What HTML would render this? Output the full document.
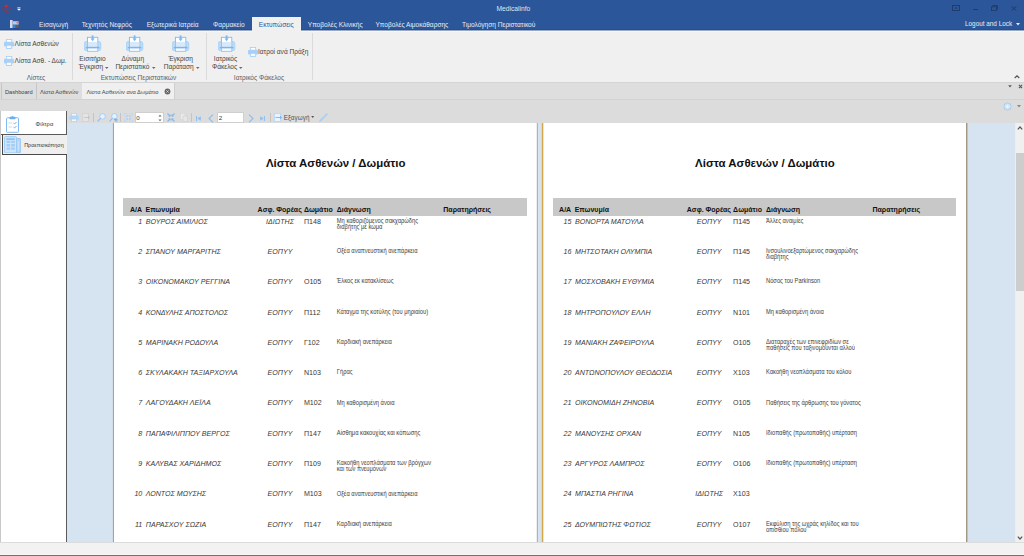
<!DOCTYPE html><html><head><meta charset="utf-8"><style>
*{margin:0;padding:0;box-sizing:border-box}
html,body{width:1024px;height:556px;overflow:hidden;background:#f0f0f0;font-family:"Liberation Sans",sans-serif}
.a{position:absolute}
.t{position:absolute;white-space:nowrap}
</style></head><body><div class="a" style="left:0px;top:0px;width:1024px;height:29px;background:#2b579a;"></div>
<div class="a" style="left:0px;top:29px;width:1024px;height:1px;background:#23508f;"></div>
<div class="a" style="left:0px;top:30px;width:1024px;height:52px;background:#f0f0f0;"></div>
<div class="a" style="left:0px;top:30px;width:1024px;height:1px;background:#9aaac4;"></div>
<div class="a" style="left:0px;top:31px;width:1024px;height:1px;background:#f7f6f3;"></div>
<div class="a" style="left:0px;top:82px;width:1024px;height:18px;background:#dedede;"></div>
<div class="a" style="left:0px;top:99px;width:1024px;height:1px;background:#d2d2d2;"></div>
<div class="a" style="left:0px;top:100px;width:1024px;height:11px;background:#dcdcdc;"></div>
<div class="a" style="left:0px;top:111px;width:1px;height:431px;background:#c8c8c8;"></div>
<div class="a" style="left:1px;top:111px;width:65px;height:431px;background:#fff;"></div>
<div class="a" style="left:66px;top:111px;width:1px;height:431px;background:#5a5a5a;"></div>
<div class="a" style="left:67px;top:111px;width:957px;height:12px;background:#dcdcdc;"></div>
<div class="a" style="left:67px;top:123px;width:949px;height:419px;background:#d6e4f1;"></div>
<div class="a" style="left:1015px;top:123px;width:1px;height:419px;background:#e8eef6;"></div>
<div class="a" style="left:1016px;top:123px;width:8px;height:419px;background:#f0f0f0;"></div>
<div class="a" style="left:1016px;top:153px;width:8px;height:138px;background:#cdcdcd;"></div>
<div class="a" style="left:0px;top:542px;width:1024px;height:1px;background:#dcdcdc;"></div>
<div class="a" style="left:0px;top:543px;width:1024px;height:11px;background:#f2f2f2;"></div>
<div class="a" style="left:0px;top:554px;width:1024px;height:1px;background:#f8f8f8;"></div>
<div class="a" style="left:0px;top:555px;width:1024px;height:1px;background:#707070;"></div>
<div class="a" style="left:112px;top:123px;width:1px;height:419px;background:#d0dcea;"></div>
<div class="a" style="left:113px;top:123px;width:1px;height:419px;background:#a0a4a8;"></div>
<div class="a" style="left:114px;top:123px;width:422px;height:419px;background:#fff;"></div>
<div class="a" style="left:536px;top:123px;width:1px;height:419px;background:#eeeeee;"></div>
<div class="a" style="left:537px;top:123px;width:1px;height:419px;background:#a9b5c1;"></div>
<div class="a" style="left:541px;top:123px;width:1px;height:419px;background:#e6d8a8;"></div>
<div class="a" style="left:542px;top:123px;width:1px;height:419px;background:#d4a848;"></div>
<div class="a" style="left:543px;top:123px;width:1px;height:419px;background:#e0e4ee;"></div>
<div class="a" style="left:544px;top:123px;width:422px;height:419px;background:#fff;"></div>
<div class="a" style="left:966px;top:123px;width:1px;height:419px;background:#a09880;"></div>
<div class="a" style="left:967px;top:123px;width:1px;height:419px;background:#f5c040;"></div>
<div class="a" style="left:968px;top:123px;width:1px;height:419px;background:#d8e2ee;"></div>
<div class="t" style="left:496.40px;top:6.13px;font-size:6.7px;line-height:6.7px;color:#dde5f0;font-weight:400;font-style:normal;">Medicalinfo</div>
<div class="a" style="left:252px;top:17px;width:49px;height:15px;background:#f0f0f0;"></div>
<div class="t" style="left:39.10px;top:22.36px;font-size:6.55px;line-height:6.55px;color:#e6ecf5;font-weight:400;font-style:normal;">Εισαγωγή</div>
<div class="t" style="left:81.70px;top:22.36px;font-size:6.55px;line-height:6.55px;color:#e6ecf5;font-weight:400;font-style:normal;">Τεχνητός Νεφρός</div>
<div class="t" style="left:146.70px;top:22.36px;font-size:6.55px;line-height:6.55px;color:#e6ecf5;font-weight:400;font-style:normal;">Εξωτερικά Ιατρεία</div>
<div class="t" style="left:213.00px;top:22.36px;font-size:6.55px;line-height:6.55px;color:#e6ecf5;font-weight:400;font-style:normal;">Φαρμακείο</div>
<div class="t" style="left:258.80px;top:22.36px;font-size:6.55px;line-height:6.55px;color:#2b579a;font-weight:400;font-style:normal;">Εκτυπώσεις</div>
<div class="t" style="left:307.80px;top:22.36px;font-size:6.55px;line-height:6.55px;color:#e6ecf5;font-weight:400;font-style:normal;">Υποβολές Κλινικής</div>
<div class="t" style="left:375.50px;top:22.36px;font-size:6.55px;line-height:6.55px;color:#e6ecf5;font-weight:400;font-style:normal;">Υποβολές Αιμοκάθαρσης</div>
<div class="t" style="left:462.00px;top:22.36px;font-size:6.55px;line-height:6.55px;color:#e6ecf5;font-weight:400;font-style:normal;">Τιμολόγηση Περιστατικού</div>
<div class="t" style="left:965.00px;top:20.80px;font-size:6.38px;line-height:6.38px;color:#e6ecf5;font-weight:400;font-style:normal;">Logout and Lock</div>
<svg class="a" style="left:4px;top:39px" width="10" height="10" viewBox="0 0 10 10"><rect x="2.3" y="0.4" width="5.4" height="3" fill="#fff" stroke="#a4cef6" stroke-width="0.8"/><rect x="0" y="2.8" width="10" height="4.6" rx="1.2" fill="#a8d0f8"/><rect x="2.3" y="6.2" width="5.4" height="3.2" fill="#f2f8fe" stroke="#a4cef6" stroke-width="0.8"/></svg>
<div class="t" style="left:14.60px;top:40.56px;font-size:6.55px;line-height:6.55px;color:#454545;font-weight:400;font-style:normal;">Λίστα Ασθενών</div>
<svg class="a" style="left:4px;top:56px" width="10" height="10" viewBox="0 0 10 10"><rect x="2.3" y="0.4" width="5.4" height="3" fill="#fff" stroke="#a4cef6" stroke-width="0.8"/><rect x="0" y="2.8" width="10" height="4.6" rx="1.2" fill="#a8d0f8"/><rect x="2.3" y="6.2" width="5.4" height="3.2" fill="#f2f8fe" stroke="#a4cef6" stroke-width="0.8"/></svg>
<div class="t" style="left:14.60px;top:57.56px;font-size:6.55px;line-height:6.55px;color:#454545;font-weight:400;font-style:normal;">Λίστα Ασθ. - Δωμ.</div>
<div class="t" style="left:-164.00px;width:400px;text-align:center;top:74.66px;font-size:6.55px;line-height:6.55px;color:#5e5e5e;font-weight:400;font-style:normal;">Λίστες</div>
<div class="a" style="left:72px;top:33px;width:1px;height:47px;background:#dadada;"></div>
<svg class="a" style="left:84px;top:35px" width="18" height="18" viewBox="0 0 18 18"><rect x="0.4" y="6.6" width="16.4" height="9" rx="1.6" fill="#bcdcf8" stroke="#a6d0f6" stroke-width="0.8"/><rect x="3.4" y="2.3" width="10.4" height="9.6" fill="#fff" stroke="#86b8ec" stroke-width="0.9"/><rect x="3.9" y="7" width="9.4" height="4.5" fill="#d6eafc"/><rect x="7.7" y="0.4" width="1.8" height="4" fill="#80b8ee"/><path d="M6.6 3.6 L8.6 6.2 L10.6 3.6Z" fill="#80b8ee"/><rect x="1.8" y="12.2" width="13.6" height="1.1" fill="#6aa8e8"/><rect x="3.4" y="13" width="10.4" height="3.3" fill="#f4faff" stroke="#8cbcee" stroke-width="0.8"/></svg>
<svg class="a" style="left:126px;top:35px" width="18" height="18" viewBox="0 0 18 18"><rect x="0.4" y="6.6" width="16.4" height="9" rx="1.6" fill="#bcdcf8" stroke="#a6d0f6" stroke-width="0.8"/><rect x="3.4" y="2.3" width="10.4" height="9.6" fill="#fff" stroke="#86b8ec" stroke-width="0.9"/><rect x="3.9" y="7" width="9.4" height="4.5" fill="#d6eafc"/><rect x="7.7" y="0.4" width="1.8" height="4" fill="#80b8ee"/><path d="M6.6 3.6 L8.6 6.2 L10.6 3.6Z" fill="#80b8ee"/><rect x="1.8" y="12.2" width="13.6" height="1.1" fill="#6aa8e8"/><rect x="3.4" y="13" width="10.4" height="3.3" fill="#f4faff" stroke="#8cbcee" stroke-width="0.8"/></svg>
<svg class="a" style="left:172px;top:35px" width="18" height="18" viewBox="0 0 18 18"><rect x="0.4" y="6.6" width="16.4" height="9" rx="1.6" fill="#bcdcf8" stroke="#a6d0f6" stroke-width="0.8"/><rect x="3.4" y="2.3" width="10.4" height="9.6" fill="#fff" stroke="#86b8ec" stroke-width="0.9"/><rect x="3.9" y="7" width="9.4" height="4.5" fill="#d6eafc"/><rect x="7.7" y="0.4" width="1.8" height="4" fill="#80b8ee"/><path d="M6.6 3.6 L8.6 6.2 L10.6 3.6Z" fill="#80b8ee"/><rect x="1.8" y="12.2" width="13.6" height="1.1" fill="#6aa8e8"/><rect x="3.4" y="13" width="10.4" height="3.3" fill="#f4faff" stroke="#8cbcee" stroke-width="0.8"/></svg>
<svg class="a" style="left:218px;top:35px" width="18" height="18" viewBox="0 0 18 18"><rect x="0.4" y="6.6" width="16.4" height="9" rx="1.6" fill="#bcdcf8" stroke="#a6d0f6" stroke-width="0.8"/><rect x="3.4" y="2.3" width="10.4" height="9.6" fill="#fff" stroke="#86b8ec" stroke-width="0.9"/><rect x="3.9" y="7" width="9.4" height="4.5" fill="#d6eafc"/><rect x="7.7" y="0.4" width="1.8" height="4" fill="#80b8ee"/><path d="M6.6 3.6 L8.6 6.2 L10.6 3.6Z" fill="#80b8ee"/><rect x="1.8" y="12.2" width="13.6" height="1.1" fill="#6aa8e8"/><rect x="3.4" y="13" width="10.4" height="3.3" fill="#f4faff" stroke="#8cbcee" stroke-width="0.8"/></svg>
<div class="t" style="left:-107.50px;width:400px;text-align:center;top:56.46px;font-size:6.55px;line-height:6.55px;color:#454545;font-weight:400;font-style:normal;">Εισιτήριο</div>
<div class="t" style="left:-109.00px;width:400px;text-align:center;top:64.46px;font-size:6.55px;line-height:6.55px;color:#454545;font-weight:400;font-style:normal;">Έγκριση</div>
<div class="t" style="left:-67.20px;width:400px;text-align:center;top:56.46px;font-size:6.55px;line-height:6.55px;color:#454545;font-weight:400;font-style:normal;">Δύναμη</div>
<div class="t" style="left:-67.60px;width:400px;text-align:center;top:64.46px;font-size:6.55px;line-height:6.55px;color:#454545;font-weight:400;font-style:normal;">Περιστατικό</div>
<div class="t" style="left:-19.30px;width:400px;text-align:center;top:56.46px;font-size:6.55px;line-height:6.55px;color:#454545;font-weight:400;font-style:normal;">Έγκριση</div>
<div class="t" style="left:-21.30px;width:400px;text-align:center;top:64.46px;font-size:6.55px;line-height:6.55px;color:#454545;font-weight:400;font-style:normal;">Παράταση</div>
<div class="t" style="left:25.50px;width:400px;text-align:center;top:56.46px;font-size:6.55px;line-height:6.55px;color:#454545;font-weight:400;font-style:normal;">Ιατρικός</div>
<div class="t" style="left:24.60px;width:400px;text-align:center;top:64.46px;font-size:6.55px;line-height:6.55px;color:#454545;font-weight:400;font-style:normal;">Φάκελος</div>
<svg class="a" style="left:104.75px;top:66.5px" width="4" height="3" viewBox="0 0 4 3"><path d="M0 0 L3.5 0 L1.75 2Z" fill="#6a6a6a"/></svg>
<svg class="a" style="left:152.45px;top:66.5px" width="4" height="3" viewBox="0 0 4 3"><path d="M0 0 L3.5 0 L1.75 2Z" fill="#6a6a6a"/></svg>
<svg class="a" style="left:196.15px;top:66.5px" width="4" height="3" viewBox="0 0 4 3"><path d="M0 0 L3.5 0 L1.75 2Z" fill="#6a6a6a"/></svg>
<svg class="a" style="left:238.75px;top:66.5px" width="4" height="3" viewBox="0 0 4 3"><path d="M0 0 L3.5 0 L1.75 2Z" fill="#6a6a6a"/></svg>
<div class="t" style="left:-61.50px;width:400px;text-align:center;top:74.66px;font-size:6.55px;line-height:6.55px;color:#5e5e5e;font-weight:400;font-style:normal;">Εκτυπώσεις Περιστατικών</div>
<div class="a" style="left:206px;top:33px;width:1px;height:47px;background:#dadada;"></div>
<svg class="a" style="left:248px;top:47px" width="10" height="10" viewBox="0 0 10 10"><rect x="2.3" y="0.4" width="5.4" height="3" fill="#fff" stroke="#a4cef6" stroke-width="0.8"/><rect x="0" y="2.8" width="10" height="4.6" rx="1.2" fill="#a8d0f8"/><rect x="2.3" y="6.2" width="5.4" height="3.2" fill="#f2f8fe" stroke="#a4cef6" stroke-width="0.8"/></svg>
<div class="t" style="left:258.00px;top:48.86px;font-size:6.55px;line-height:6.55px;color:#454545;font-weight:400;font-style:normal;">Ιατροί ανά Πράξη</div>
<div class="t" style="left:59.00px;width:400px;text-align:center;top:74.66px;font-size:6.55px;line-height:6.55px;color:#5e5e5e;font-weight:400;font-style:normal;">Ιατρικός Φάκελος</div>
<div class="a" style="left:312px;top:33px;width:1px;height:47px;background:#dadada;"></div>
<div class="t" style="left:135.70px;width:400px;text-align:center;top:157.51px;font-size:11.45px;line-height:11.45px;color:#111;font-weight:700;font-style:normal;">Λίστα Ασθενών / Δωμάτιο</div>
<div class="a" style="left:123.3px;top:197.8px;width:403.7px;height:17.8px;background:#c8c8c8;"></div>
<div class="t" style="left:129.90px;top:205.57px;font-size:7.0px;line-height:7.0px;color:#111;font-weight:700;font-style:normal;transform:scaleY(1.1);transform-origin:50% 5.926px;">A/A</div>
<div class="t" style="left:145.50px;top:205.57px;font-size:7.0px;line-height:7.0px;color:#111;font-weight:700;font-style:normal;transform:scaleY(1.1);transform-origin:50% 5.926px;">Επωνυμία</div>
<div class="t" style="left:257.60px;top:205.57px;font-size:7.0px;line-height:7.0px;color:#111;font-weight:700;font-style:normal;transform:scaleY(1.1);transform-origin:50% 5.926px;">Ασφ. Φορέας</div>
<div class="t" style="left:303.90px;top:205.57px;font-size:7.0px;line-height:7.0px;color:#111;font-weight:700;font-style:normal;transform:scaleY(1.1);transform-origin:50% 5.926px;">Δωμάτιο</div>
<div class="t" style="left:336.80px;top:205.57px;font-size:7.0px;line-height:7.0px;color:#111;font-weight:700;font-style:normal;transform:scaleY(1.1);transform-origin:50% 5.926px;">Διάγνωση</div>
<div class="t" style="left:443.30px;top:205.57px;font-size:7.0px;line-height:7.0px;color:#111;font-weight:700;font-style:normal;transform:scaleY(1.1);transform-origin:50% 5.926px;">Παρατηρήσεις</div>
<div class="t" style="right:881.70px;top:218.59px;font-size:7.1px;line-height:7.1px;color:#383838;font-weight:400;font-style:italic;transform:scaleY(1.12);transform-origin:50% 6.010px;">1</div>
<div class="t" style="left:145.80px;top:218.59px;font-size:7.1px;line-height:7.1px;color:#383838;font-weight:400;font-style:italic;transform:scaleY(1.12);transform-origin:50% 6.010px;">ΒΟΥΡΟΣ ΑΙΜΙΛΙΟΣ</div>
<div class="t" style="left:80.00px;width:400px;text-align:center;top:218.59px;font-size:7.1px;line-height:7.1px;color:#383838;font-weight:400;font-style:italic;transform:scaleY(1.12);transform-origin:50% 6.010px;">ΙΔΙΩΤΗΣ</div>
<div class="t" style="left:303.90px;top:218.59px;font-size:7.1px;line-height:7.1px;color:#383838;font-weight:400;font-style:normal;transform:scaleY(1.12);transform-origin:50% 6.010px;">Π148</div>
<div class="t" style="left:336.80px;top:218.73px;font-size:5.75px;line-height:5.75px;color:#3c3c3c;font-weight:400;font-style:normal;transform:scaleY(1.12);transform-origin:50% 4.867px;">Μη καθοριζόμενος σακχαρώδης</div>
<div class="t" style="left:336.80px;top:224.73px;font-size:5.75px;line-height:5.75px;color:#3c3c3c;font-weight:400;font-style:normal;transform:scaleY(1.12);transform-origin:50% 4.867px;">διαβήτης με κώμα</div>
<div class="t" style="right:881.70px;top:248.90px;font-size:7.1px;line-height:7.1px;color:#383838;font-weight:400;font-style:italic;transform:scaleY(1.12);transform-origin:50% 6.010px;">2</div>
<div class="t" style="left:145.80px;top:248.90px;font-size:7.1px;line-height:7.1px;color:#383838;font-weight:400;font-style:italic;transform:scaleY(1.12);transform-origin:50% 6.010px;">ΣΠΑΝΟΥ ΜΑΡΓΑΡΙΤΗΣ</div>
<div class="t" style="left:80.00px;width:400px;text-align:center;top:248.90px;font-size:7.1px;line-height:7.1px;color:#383838;font-weight:400;font-style:italic;transform:scaleY(1.12);transform-origin:50% 6.010px;">ΕΟΠΥΥ</div>
<div class="t" style="left:336.80px;top:249.04px;font-size:5.75px;line-height:5.75px;color:#3c3c3c;font-weight:400;font-style:normal;transform:scaleY(1.12);transform-origin:50% 4.867px;">Οξέα αναπνευστική ανεπάρκεια</div>
<div class="t" style="right:881.70px;top:279.21px;font-size:7.1px;line-height:7.1px;color:#383838;font-weight:400;font-style:italic;transform:scaleY(1.12);transform-origin:50% 6.010px;">3</div>
<div class="t" style="left:145.80px;top:279.21px;font-size:7.1px;line-height:7.1px;color:#383838;font-weight:400;font-style:italic;transform:scaleY(1.12);transform-origin:50% 6.010px;">ΟΙΚΟΝΟΜΑΚΟΥ ΡΕΓΓΙΝΑ</div>
<div class="t" style="left:80.00px;width:400px;text-align:center;top:279.21px;font-size:7.1px;line-height:7.1px;color:#383838;font-weight:400;font-style:italic;transform:scaleY(1.12);transform-origin:50% 6.010px;">ΕΟΠΥΥ</div>
<div class="t" style="left:303.90px;top:279.21px;font-size:7.1px;line-height:7.1px;color:#383838;font-weight:400;font-style:normal;transform:scaleY(1.12);transform-origin:50% 6.010px;">Ο105</div>
<div class="t" style="left:336.80px;top:279.35px;font-size:5.75px;line-height:5.75px;color:#3c3c3c;font-weight:400;font-style:normal;transform:scaleY(1.12);transform-origin:50% 4.867px;">Έλκος εκ κατακλίσεως</div>
<div class="t" style="right:881.70px;top:309.52px;font-size:7.1px;line-height:7.1px;color:#383838;font-weight:400;font-style:italic;transform:scaleY(1.12);transform-origin:50% 6.010px;">4</div>
<div class="t" style="left:145.80px;top:309.52px;font-size:7.1px;line-height:7.1px;color:#383838;font-weight:400;font-style:italic;transform:scaleY(1.12);transform-origin:50% 6.010px;">ΚΟΝΔΥΛΗΣ ΑΠΟΣΤΟΛΟΣ</div>
<div class="t" style="left:80.00px;width:400px;text-align:center;top:309.52px;font-size:7.1px;line-height:7.1px;color:#383838;font-weight:400;font-style:italic;transform:scaleY(1.12);transform-origin:50% 6.010px;">ΕΟΠΥΥ</div>
<div class="t" style="left:303.90px;top:309.52px;font-size:7.1px;line-height:7.1px;color:#383838;font-weight:400;font-style:normal;transform:scaleY(1.12);transform-origin:50% 6.010px;">Π112</div>
<div class="t" style="left:336.80px;top:309.66px;font-size:5.75px;line-height:5.75px;color:#3c3c3c;font-weight:400;font-style:normal;transform:scaleY(1.12);transform-origin:50% 4.867px;">Κάταγμα της κοτύλης (του μηριαίου)</div>
<div class="t" style="right:881.70px;top:339.83px;font-size:7.1px;line-height:7.1px;color:#383838;font-weight:400;font-style:italic;transform:scaleY(1.12);transform-origin:50% 6.010px;">5</div>
<div class="t" style="left:145.80px;top:339.83px;font-size:7.1px;line-height:7.1px;color:#383838;font-weight:400;font-style:italic;transform:scaleY(1.12);transform-origin:50% 6.010px;">ΜΑΡΙΝΑΚΗ ΡΟΔΟΥΛΑ</div>
<div class="t" style="left:80.00px;width:400px;text-align:center;top:339.83px;font-size:7.1px;line-height:7.1px;color:#383838;font-weight:400;font-style:italic;transform:scaleY(1.12);transform-origin:50% 6.010px;">ΕΟΠΥΥ</div>
<div class="t" style="left:303.90px;top:339.83px;font-size:7.1px;line-height:7.1px;color:#383838;font-weight:400;font-style:normal;transform:scaleY(1.12);transform-origin:50% 6.010px;">Γ102</div>
<div class="t" style="left:336.80px;top:339.97px;font-size:5.75px;line-height:5.75px;color:#3c3c3c;font-weight:400;font-style:normal;transform:scaleY(1.12);transform-origin:50% 4.867px;">Καρδιακή ανεπάρκεια</div>
<div class="t" style="right:881.70px;top:370.14px;font-size:7.1px;line-height:7.1px;color:#383838;font-weight:400;font-style:italic;transform:scaleY(1.12);transform-origin:50% 6.010px;">6</div>
<div class="t" style="left:145.80px;top:370.14px;font-size:7.1px;line-height:7.1px;color:#383838;font-weight:400;font-style:italic;transform:scaleY(1.12);transform-origin:50% 6.010px;">ΣΚΥΛΑΚΑΚΗ ΤΑΞΙΑΡΧΟΥΛΑ</div>
<div class="t" style="left:80.00px;width:400px;text-align:center;top:370.14px;font-size:7.1px;line-height:7.1px;color:#383838;font-weight:400;font-style:italic;transform:scaleY(1.12);transform-origin:50% 6.010px;">ΕΟΠΥΥ</div>
<div class="t" style="left:303.90px;top:370.14px;font-size:7.1px;line-height:7.1px;color:#383838;font-weight:400;font-style:normal;transform:scaleY(1.12);transform-origin:50% 6.010px;">Ν103</div>
<div class="t" style="left:336.80px;top:370.28px;font-size:5.75px;line-height:5.75px;color:#3c3c3c;font-weight:400;font-style:normal;transform:scaleY(1.12);transform-origin:50% 4.867px;">Γήρας</div>
<div class="t" style="right:881.70px;top:400.45px;font-size:7.1px;line-height:7.1px;color:#383838;font-weight:400;font-style:italic;transform:scaleY(1.12);transform-origin:50% 6.010px;">7</div>
<div class="t" style="left:145.80px;top:400.45px;font-size:7.1px;line-height:7.1px;color:#383838;font-weight:400;font-style:italic;transform:scaleY(1.12);transform-origin:50% 6.010px;">ΛΑΓΟΥΔΑΚΗ ΛΕΪΛΑ</div>
<div class="t" style="left:80.00px;width:400px;text-align:center;top:400.45px;font-size:7.1px;line-height:7.1px;color:#383838;font-weight:400;font-style:italic;transform:scaleY(1.12);transform-origin:50% 6.010px;">ΕΟΠΥΥ</div>
<div class="t" style="left:303.90px;top:400.45px;font-size:7.1px;line-height:7.1px;color:#383838;font-weight:400;font-style:normal;transform:scaleY(1.12);transform-origin:50% 6.010px;">Μ102</div>
<div class="t" style="left:336.80px;top:400.59px;font-size:5.75px;line-height:5.75px;color:#3c3c3c;font-weight:400;font-style:normal;transform:scaleY(1.12);transform-origin:50% 4.867px;">Μη καθορισμένη άνοια</div>
<div class="t" style="right:881.70px;top:430.76px;font-size:7.1px;line-height:7.1px;color:#383838;font-weight:400;font-style:italic;transform:scaleY(1.12);transform-origin:50% 6.010px;">8</div>
<div class="t" style="left:145.80px;top:430.76px;font-size:7.1px;line-height:7.1px;color:#383838;font-weight:400;font-style:italic;transform:scaleY(1.12);transform-origin:50% 6.010px;">ΠΑΠΑΦΙΛΙΠΠΟΥ ΒΕΡΓΟΣ</div>
<div class="t" style="left:80.00px;width:400px;text-align:center;top:430.76px;font-size:7.1px;line-height:7.1px;color:#383838;font-weight:400;font-style:italic;transform:scaleY(1.12);transform-origin:50% 6.010px;">ΕΟΠΥΥ</div>
<div class="t" style="left:303.90px;top:430.76px;font-size:7.1px;line-height:7.1px;color:#383838;font-weight:400;font-style:normal;transform:scaleY(1.12);transform-origin:50% 6.010px;">Π147</div>
<div class="t" style="left:336.80px;top:430.90px;font-size:5.75px;line-height:5.75px;color:#3c3c3c;font-weight:400;font-style:normal;transform:scaleY(1.12);transform-origin:50% 4.867px;">Αίσθημα κακουχίας και κόπωσης</div>
<div class="t" style="right:881.70px;top:461.07px;font-size:7.1px;line-height:7.1px;color:#383838;font-weight:400;font-style:italic;transform:scaleY(1.12);transform-origin:50% 6.010px;">9</div>
<div class="t" style="left:145.80px;top:461.07px;font-size:7.1px;line-height:7.1px;color:#383838;font-weight:400;font-style:italic;transform:scaleY(1.12);transform-origin:50% 6.010px;">ΚΑΛΥΒΑΣ ΧΑΡΙΔΗΜΟΣ</div>
<div class="t" style="left:80.00px;width:400px;text-align:center;top:461.07px;font-size:7.1px;line-height:7.1px;color:#383838;font-weight:400;font-style:italic;transform:scaleY(1.12);transform-origin:50% 6.010px;">ΕΟΠΥΥ</div>
<div class="t" style="left:303.90px;top:461.07px;font-size:7.1px;line-height:7.1px;color:#383838;font-weight:400;font-style:normal;transform:scaleY(1.12);transform-origin:50% 6.010px;">Π109</div>
<div class="t" style="left:336.80px;top:461.21px;font-size:5.75px;line-height:5.75px;color:#3c3c3c;font-weight:400;font-style:normal;transform:scaleY(1.12);transform-origin:50% 4.867px;">Κακοήθη νεοπλάσματα των βρόγχων</div>
<div class="t" style="left:336.80px;top:467.21px;font-size:5.75px;line-height:5.75px;color:#3c3c3c;font-weight:400;font-style:normal;transform:scaleY(1.12);transform-origin:50% 4.867px;">και των πνευμόνων</div>
<div class="t" style="right:881.70px;top:491.38px;font-size:7.1px;line-height:7.1px;color:#383838;font-weight:400;font-style:italic;transform:scaleY(1.12);transform-origin:50% 6.010px;">10</div>
<div class="t" style="left:145.80px;top:491.38px;font-size:7.1px;line-height:7.1px;color:#383838;font-weight:400;font-style:italic;transform:scaleY(1.12);transform-origin:50% 6.010px;">ΛΟΝΤΟΣ ΜΩΥΣΗΣ</div>
<div class="t" style="left:80.00px;width:400px;text-align:center;top:491.38px;font-size:7.1px;line-height:7.1px;color:#383838;font-weight:400;font-style:italic;transform:scaleY(1.12);transform-origin:50% 6.010px;">ΕΟΠΥΥ</div>
<div class="t" style="left:303.90px;top:491.38px;font-size:7.1px;line-height:7.1px;color:#383838;font-weight:400;font-style:normal;transform:scaleY(1.12);transform-origin:50% 6.010px;">Μ103</div>
<div class="t" style="left:336.80px;top:491.52px;font-size:5.75px;line-height:5.75px;color:#3c3c3c;font-weight:400;font-style:normal;transform:scaleY(1.12);transform-origin:50% 4.867px;">Οξέα αναπνευστική ανεπάρκεια</div>
<div class="t" style="right:881.70px;top:521.69px;font-size:7.1px;line-height:7.1px;color:#383838;font-weight:400;font-style:italic;transform:scaleY(1.12);transform-origin:50% 6.010px;">11</div>
<div class="t" style="left:145.80px;top:521.69px;font-size:7.1px;line-height:7.1px;color:#383838;font-weight:400;font-style:italic;transform:scaleY(1.12);transform-origin:50% 6.010px;">ΠΑΡΑΣΧΟΥ ΣΩΖΙΑ</div>
<div class="t" style="left:80.00px;width:400px;text-align:center;top:521.69px;font-size:7.1px;line-height:7.1px;color:#383838;font-weight:400;font-style:italic;transform:scaleY(1.12);transform-origin:50% 6.010px;">ΕΟΠΥΥ</div>
<div class="t" style="left:303.90px;top:521.69px;font-size:7.1px;line-height:7.1px;color:#383838;font-weight:400;font-style:normal;transform:scaleY(1.12);transform-origin:50% 6.010px;">Π147</div>
<div class="t" style="left:336.80px;top:521.83px;font-size:5.75px;line-height:5.75px;color:#3c3c3c;font-weight:400;font-style:normal;transform:scaleY(1.12);transform-origin:50% 4.867px;">Καρδιακή ανεπάρκεια</div>
<div class="t" style="left:564.90px;width:400px;text-align:center;top:157.51px;font-size:11.45px;line-height:11.45px;color:#111;font-weight:700;font-style:normal;">Λίστα Ασθενών / Δωμάτιο</div>
<div class="a" style="left:552.5px;top:197.8px;width:403.7px;height:17.8px;background:#c8c8c8;"></div>
<div class="t" style="left:559.10px;top:205.57px;font-size:7.0px;line-height:7.0px;color:#111;font-weight:700;font-style:normal;transform:scaleY(1.1);transform-origin:50% 5.926px;">A/A</div>
<div class="t" style="left:574.70px;top:205.57px;font-size:7.0px;line-height:7.0px;color:#111;font-weight:700;font-style:normal;transform:scaleY(1.1);transform-origin:50% 5.926px;">Επωνυμία</div>
<div class="t" style="left:686.80px;top:205.57px;font-size:7.0px;line-height:7.0px;color:#111;font-weight:700;font-style:normal;transform:scaleY(1.1);transform-origin:50% 5.926px;">Ασφ. Φορέας</div>
<div class="t" style="left:733.10px;top:205.57px;font-size:7.0px;line-height:7.0px;color:#111;font-weight:700;font-style:normal;transform:scaleY(1.1);transform-origin:50% 5.926px;">Δωμάτιο</div>
<div class="t" style="left:766.00px;top:205.57px;font-size:7.0px;line-height:7.0px;color:#111;font-weight:700;font-style:normal;transform:scaleY(1.1);transform-origin:50% 5.926px;">Διάγνωση</div>
<div class="t" style="left:872.50px;top:205.57px;font-size:7.0px;line-height:7.0px;color:#111;font-weight:700;font-style:normal;transform:scaleY(1.1);transform-origin:50% 5.926px;">Παρατηρήσεις</div>
<div class="t" style="right:452.50px;top:218.59px;font-size:7.1px;line-height:7.1px;color:#383838;font-weight:400;font-style:italic;transform:scaleY(1.12);transform-origin:50% 6.010px;">15</div>
<div class="t" style="left:575.00px;top:218.59px;font-size:7.1px;line-height:7.1px;color:#383838;font-weight:400;font-style:italic;transform:scaleY(1.12);transform-origin:50% 6.010px;">ΒΟΝΟΡΤΑ ΜΑΤΟΥΛΑ</div>
<div class="t" style="left:509.20px;width:400px;text-align:center;top:218.59px;font-size:7.1px;line-height:7.1px;color:#383838;font-weight:400;font-style:italic;transform:scaleY(1.12);transform-origin:50% 6.010px;">ΕΟΠΥΥ</div>
<div class="t" style="left:733.10px;top:218.59px;font-size:7.1px;line-height:7.1px;color:#383838;font-weight:400;font-style:normal;transform:scaleY(1.12);transform-origin:50% 6.010px;">Π145</div>
<div class="t" style="left:766.00px;top:218.73px;font-size:5.75px;line-height:5.75px;color:#3c3c3c;font-weight:400;font-style:normal;transform:scaleY(1.12);transform-origin:50% 4.867px;">Άλλες αναιμίες</div>
<div class="t" style="right:452.50px;top:248.90px;font-size:7.1px;line-height:7.1px;color:#383838;font-weight:400;font-style:italic;transform:scaleY(1.12);transform-origin:50% 6.010px;">16</div>
<div class="t" style="left:575.00px;top:248.90px;font-size:7.1px;line-height:7.1px;color:#383838;font-weight:400;font-style:italic;transform:scaleY(1.12);transform-origin:50% 6.010px;">ΜΗΤΣΟΤΑΚΗ ΟΛΥΜΠΙΑ</div>
<div class="t" style="left:509.20px;width:400px;text-align:center;top:248.90px;font-size:7.1px;line-height:7.1px;color:#383838;font-weight:400;font-style:italic;transform:scaleY(1.12);transform-origin:50% 6.010px;">ΕΟΠΥΥ</div>
<div class="t" style="left:733.10px;top:248.90px;font-size:7.1px;line-height:7.1px;color:#383838;font-weight:400;font-style:normal;transform:scaleY(1.12);transform-origin:50% 6.010px;">Π145</div>
<div class="t" style="left:766.00px;top:249.04px;font-size:5.75px;line-height:5.75px;color:#3c3c3c;font-weight:400;font-style:normal;transform:scaleY(1.12);transform-origin:50% 4.867px;">Ινσουλινοεξαρτώμενος σακχαρώδης</div>
<div class="t" style="left:766.00px;top:255.04px;font-size:5.75px;line-height:5.75px;color:#3c3c3c;font-weight:400;font-style:normal;transform:scaleY(1.12);transform-origin:50% 4.867px;">διαβήτης</div>
<div class="t" style="right:452.50px;top:279.21px;font-size:7.1px;line-height:7.1px;color:#383838;font-weight:400;font-style:italic;transform:scaleY(1.12);transform-origin:50% 6.010px;">17</div>
<div class="t" style="left:575.00px;top:279.21px;font-size:7.1px;line-height:7.1px;color:#383838;font-weight:400;font-style:italic;transform:scaleY(1.12);transform-origin:50% 6.010px;">ΜΟΣΧΟΒΑΚΗ ΕΥΘΥΜΙΑ</div>
<div class="t" style="left:509.20px;width:400px;text-align:center;top:279.21px;font-size:7.1px;line-height:7.1px;color:#383838;font-weight:400;font-style:italic;transform:scaleY(1.12);transform-origin:50% 6.010px;">ΕΟΠΥΥ</div>
<div class="t" style="left:733.10px;top:279.21px;font-size:7.1px;line-height:7.1px;color:#383838;font-weight:400;font-style:normal;transform:scaleY(1.12);transform-origin:50% 6.010px;">Π145</div>
<div class="t" style="left:766.00px;top:279.35px;font-size:5.75px;line-height:5.75px;color:#3c3c3c;font-weight:400;font-style:normal;transform:scaleY(1.12);transform-origin:50% 4.867px;">Νόσος του Parkinson</div>
<div class="t" style="right:452.50px;top:309.52px;font-size:7.1px;line-height:7.1px;color:#383838;font-weight:400;font-style:italic;transform:scaleY(1.12);transform-origin:50% 6.010px;">18</div>
<div class="t" style="left:575.00px;top:309.52px;font-size:7.1px;line-height:7.1px;color:#383838;font-weight:400;font-style:italic;transform:scaleY(1.12);transform-origin:50% 6.010px;">ΜΗΤΡΟΠΟΥΛΟΥ ΕΛΛΗ</div>
<div class="t" style="left:509.20px;width:400px;text-align:center;top:309.52px;font-size:7.1px;line-height:7.1px;color:#383838;font-weight:400;font-style:italic;transform:scaleY(1.12);transform-origin:50% 6.010px;">ΕΟΠΥΥ</div>
<div class="t" style="left:733.10px;top:309.52px;font-size:7.1px;line-height:7.1px;color:#383838;font-weight:400;font-style:normal;transform:scaleY(1.12);transform-origin:50% 6.010px;">Ν101</div>
<div class="t" style="left:766.00px;top:309.66px;font-size:5.75px;line-height:5.75px;color:#3c3c3c;font-weight:400;font-style:normal;transform:scaleY(1.12);transform-origin:50% 4.867px;">Μη καθορισμένη άνοια</div>
<div class="t" style="right:452.50px;top:339.83px;font-size:7.1px;line-height:7.1px;color:#383838;font-weight:400;font-style:italic;transform:scaleY(1.12);transform-origin:50% 6.010px;">19</div>
<div class="t" style="left:575.00px;top:339.83px;font-size:7.1px;line-height:7.1px;color:#383838;font-weight:400;font-style:italic;transform:scaleY(1.12);transform-origin:50% 6.010px;">ΜΑΝΙΑΚΗ ΖΑΦΕΙΡΟΥΛΑ</div>
<div class="t" style="left:509.20px;width:400px;text-align:center;top:339.83px;font-size:7.1px;line-height:7.1px;color:#383838;font-weight:400;font-style:italic;transform:scaleY(1.12);transform-origin:50% 6.010px;">ΕΟΠΥΥ</div>
<div class="t" style="left:733.10px;top:339.83px;font-size:7.1px;line-height:7.1px;color:#383838;font-weight:400;font-style:normal;transform:scaleY(1.12);transform-origin:50% 6.010px;">Ο105</div>
<div class="t" style="left:766.00px;top:339.97px;font-size:5.75px;line-height:5.75px;color:#3c3c3c;font-weight:400;font-style:normal;transform:scaleY(1.12);transform-origin:50% 4.867px;">Διαταραχές των επινεφριδίων σε</div>
<div class="t" style="left:766.00px;top:345.97px;font-size:5.75px;line-height:5.75px;color:#3c3c3c;font-weight:400;font-style:normal;transform:scaleY(1.12);transform-origin:50% 4.867px;">παθήσεις που ταξινομούνται αλλού</div>
<div class="t" style="right:452.50px;top:370.14px;font-size:7.1px;line-height:7.1px;color:#383838;font-weight:400;font-style:italic;transform:scaleY(1.12);transform-origin:50% 6.010px;">20</div>
<div class="t" style="left:575.00px;top:370.14px;font-size:7.1px;line-height:7.1px;color:#383838;font-weight:400;font-style:italic;transform:scaleY(1.12);transform-origin:50% 6.010px;">ΑΝΤΩΝΟΠΟΥΛΟΥ ΘΕΟΔΟΣΙΑ</div>
<div class="t" style="left:509.20px;width:400px;text-align:center;top:370.14px;font-size:7.1px;line-height:7.1px;color:#383838;font-weight:400;font-style:italic;transform:scaleY(1.12);transform-origin:50% 6.010px;">ΕΟΠΥΥ</div>
<div class="t" style="left:733.10px;top:370.14px;font-size:7.1px;line-height:7.1px;color:#383838;font-weight:400;font-style:normal;transform:scaleY(1.12);transform-origin:50% 6.010px;">Χ103</div>
<div class="t" style="left:766.00px;top:370.28px;font-size:5.75px;line-height:5.75px;color:#3c3c3c;font-weight:400;font-style:normal;transform:scaleY(1.12);transform-origin:50% 4.867px;">Κακοήθη νεοπλάσματα του κόλου</div>
<div class="t" style="right:452.50px;top:400.45px;font-size:7.1px;line-height:7.1px;color:#383838;font-weight:400;font-style:italic;transform:scaleY(1.12);transform-origin:50% 6.010px;">21</div>
<div class="t" style="left:575.00px;top:400.45px;font-size:7.1px;line-height:7.1px;color:#383838;font-weight:400;font-style:italic;transform:scaleY(1.12);transform-origin:50% 6.010px;">ΟΙΚΟΝΟΜΙΔΗ ΖΗΝΟΒΙΑ</div>
<div class="t" style="left:509.20px;width:400px;text-align:center;top:400.45px;font-size:7.1px;line-height:7.1px;color:#383838;font-weight:400;font-style:italic;transform:scaleY(1.12);transform-origin:50% 6.010px;">ΕΟΠΥΥ</div>
<div class="t" style="left:733.10px;top:400.45px;font-size:7.1px;line-height:7.1px;color:#383838;font-weight:400;font-style:normal;transform:scaleY(1.12);transform-origin:50% 6.010px;">Ο105</div>
<div class="t" style="left:766.00px;top:400.59px;font-size:5.75px;line-height:5.75px;color:#3c3c3c;font-weight:400;font-style:normal;transform:scaleY(1.12);transform-origin:50% 4.867px;">Παθήσεις της άρθρωσης του γόνατος</div>
<div class="t" style="right:452.50px;top:430.76px;font-size:7.1px;line-height:7.1px;color:#383838;font-weight:400;font-style:italic;transform:scaleY(1.12);transform-origin:50% 6.010px;">22</div>
<div class="t" style="left:575.00px;top:430.76px;font-size:7.1px;line-height:7.1px;color:#383838;font-weight:400;font-style:italic;transform:scaleY(1.12);transform-origin:50% 6.010px;">ΜΑΝΟΥΣΗΣ ΟΡΧΑΝ</div>
<div class="t" style="left:509.20px;width:400px;text-align:center;top:430.76px;font-size:7.1px;line-height:7.1px;color:#383838;font-weight:400;font-style:italic;transform:scaleY(1.12);transform-origin:50% 6.010px;">ΕΟΠΥΥ</div>
<div class="t" style="left:733.10px;top:430.76px;font-size:7.1px;line-height:7.1px;color:#383838;font-weight:400;font-style:normal;transform:scaleY(1.12);transform-origin:50% 6.010px;">Ν105</div>
<div class="t" style="left:766.00px;top:430.90px;font-size:5.75px;line-height:5.75px;color:#3c3c3c;font-weight:400;font-style:normal;transform:scaleY(1.12);transform-origin:50% 4.867px;">Ιδιοπαθής (πρωτοπαθής) υπέρταση</div>
<div class="t" style="right:452.50px;top:461.07px;font-size:7.1px;line-height:7.1px;color:#383838;font-weight:400;font-style:italic;transform:scaleY(1.12);transform-origin:50% 6.010px;">23</div>
<div class="t" style="left:575.00px;top:461.07px;font-size:7.1px;line-height:7.1px;color:#383838;font-weight:400;font-style:italic;transform:scaleY(1.12);transform-origin:50% 6.010px;">ΑΡΓΥΡΟΣ ΛΑΜΠΡΟΣ</div>
<div class="t" style="left:509.20px;width:400px;text-align:center;top:461.07px;font-size:7.1px;line-height:7.1px;color:#383838;font-weight:400;font-style:italic;transform:scaleY(1.12);transform-origin:50% 6.010px;">ΕΟΠΥΥ</div>
<div class="t" style="left:733.10px;top:461.07px;font-size:7.1px;line-height:7.1px;color:#383838;font-weight:400;font-style:normal;transform:scaleY(1.12);transform-origin:50% 6.010px;">Ο106</div>
<div class="t" style="left:766.00px;top:461.21px;font-size:5.75px;line-height:5.75px;color:#3c3c3c;font-weight:400;font-style:normal;transform:scaleY(1.12);transform-origin:50% 4.867px;">Ιδιοπαθής (πρωτοπαθής) υπέρταση</div>
<div class="t" style="right:452.50px;top:491.38px;font-size:7.1px;line-height:7.1px;color:#383838;font-weight:400;font-style:italic;transform:scaleY(1.12);transform-origin:50% 6.010px;">24</div>
<div class="t" style="left:575.00px;top:491.38px;font-size:7.1px;line-height:7.1px;color:#383838;font-weight:400;font-style:italic;transform:scaleY(1.12);transform-origin:50% 6.010px;">ΜΠΑΣΤΙΑ ΡΗΓΙΝΑ</div>
<div class="t" style="left:509.20px;width:400px;text-align:center;top:491.38px;font-size:7.1px;line-height:7.1px;color:#383838;font-weight:400;font-style:italic;transform:scaleY(1.12);transform-origin:50% 6.010px;">ΙΔΙΩΤΗΣ</div>
<div class="t" style="left:733.10px;top:491.38px;font-size:7.1px;line-height:7.1px;color:#383838;font-weight:400;font-style:normal;transform:scaleY(1.12);transform-origin:50% 6.010px;">Χ103</div>
<div class="t" style="right:452.50px;top:521.69px;font-size:7.1px;line-height:7.1px;color:#383838;font-weight:400;font-style:italic;transform:scaleY(1.12);transform-origin:50% 6.010px;">25</div>
<div class="t" style="left:575.00px;top:521.69px;font-size:7.1px;line-height:7.1px;color:#383838;font-weight:400;font-style:italic;transform:scaleY(1.12);transform-origin:50% 6.010px;">ΔΟΥΜΠΙΩΤΗΣ ΦΩΤΙΟΣ</div>
<div class="t" style="left:509.20px;width:400px;text-align:center;top:521.69px;font-size:7.1px;line-height:7.1px;color:#383838;font-weight:400;font-style:italic;transform:scaleY(1.12);transform-origin:50% 6.010px;">ΕΟΠΥΥ</div>
<div class="t" style="left:733.10px;top:521.69px;font-size:7.1px;line-height:7.1px;color:#383838;font-weight:400;font-style:normal;transform:scaleY(1.12);transform-origin:50% 6.010px;">Ο107</div>
<div class="t" style="left:766.00px;top:521.83px;font-size:5.75px;line-height:5.75px;color:#3c3c3c;font-weight:400;font-style:normal;transform:scaleY(1.12);transform-origin:50% 4.867px;">Εκφύλιση της ωχράς κηλίδος και του</div>
<div class="t" style="left:766.00px;top:527.83px;font-size:5.75px;line-height:5.75px;color:#3c3c3c;font-weight:400;font-style:normal;transform:scaleY(1.12);transform-origin:50% 4.867px;">οπισθίου πόλου</div>
<div class="a" style="left:0px;top:82px;width:1024px;height:1px;background:#d4d4d4;"></div>
<div class="a" style="left:1px;top:83px;width:1px;height:16px;background:#c6c6c6;"></div>
<div class="a" style="left:36px;top:83px;width:1px;height:16px;background:#c6c6c6;"></div>
<div class="a" style="left:82px;top:83px;width:92px;height:16px;background:#f0f0f0;"></div>
<div class="a" style="left:174px;top:83px;width:1px;height:16px;background:#d0d0d0;"></div>
<div class="t" style="left:4.90px;top:89.59px;font-size:5.68px;line-height:5.68px;color:#444;font-weight:400;font-style:normal;">Dashboard</div>
<div class="t" style="left:40.00px;top:89.59px;font-size:5.68px;line-height:5.68px;color:#444;font-weight:400;font-style:normal;">Λίστα Ασθενών</div>
<div class="t" style="left:86.50px;top:89.59px;font-size:5.68px;line-height:5.68px;color:#444;font-weight:400;font-style:normal;">Λίστα Ασθενών ανα Δωμάτιο</div>
<svg class="a" style="left:164px;top:88px" width="7" height="7" viewBox="0 0 7 7"><circle cx="3.5" cy="3.5" r="2.9" fill="#666"/><path d="M2.4 2.4 L4.6 4.6 M4.6 2.4 L2.4 4.6" stroke="#e8e8e8" stroke-width="0.8"/></svg>
<svg class="a" style="left:1007.5px;top:85.3px" width="4" height="3" viewBox="0 0 4 3"><path d="M0.2 0.2 L3.8 0.2 L2 2.6Z" fill="#555"/></svg>
<svg class="a" style="left:1018px;top:84.3px" width="5" height="5" viewBox="0 0 5 5"><path d="M0.9 0.9 L4.1 4.1 M4.1 0.9 L0.9 4.1" stroke="#555" stroke-width="1.1"/></svg>
<svg class="a" style="left:1013.5px;top:74.5px" width="6" height="4" viewBox="0 0 6 4"><path d="M0.7 3 L3 0.8 L5.3 3" stroke="#555" stroke-width="1.2" fill="none"/></svg>
<svg class="a" style="left:1003px;top:101.5px" width="9" height="9" viewBox="0 0 9 9"><path d="M4.5 0.5 L5.6 2 L7.5 1.8 L7.3 3.6 L8.5 4.5 L7.3 5.4 L7.5 7.2 L5.6 7 L4.5 8.5 L3.4 7 L1.5 7.2 L1.7 5.4 L0.5 4.5 L1.7 3.6 L1.5 1.8 L3.4 2Z" fill="#dcecfc" stroke="#9ccaf4" stroke-width="0.9"/><circle cx="4.5" cy="4.5" r="1.5" fill="#fafdff" stroke="#b4d8f8" stroke-width="0.6"/></svg>
<svg class="a" style="left:1017px;top:104.5px" width="4" height="3" viewBox="0 0 4 3"><path d="M0 0 L4 0 L2 2.5Z" fill="#888"/></svg>
<div class="a" style="left:1px;top:134px;width:66px;height:1px;background:#5a5a5a;"></div>
<div class="a" style="left:2px;top:135px;width:65px;height:19px;background:#efefef;"></div>
<div class="a" style="left:2px;top:134px;width:1px;height:21px;background:#4a4a4a;"></div>
<div class="a" style="left:2px;top:154px;width:65px;height:1px;background:#4a4a4a;"></div>
<svg class="a" style="left:5px;top:116px" width="15" height="17" viewBox="0 0 15 17"><rect x="1.5" y="1.8" width="12" height="14.5" rx="0.8" fill="#fff" stroke="#7cb6f0" stroke-width="0.95"/><rect x="4.5" y="0.8" width="6" height="2.4" rx="0.8" fill="#6eaef0"/><circle cx="7.5" cy="0.9" r="0.9" fill="#6eaef0"/><path d="M3.5 7 H7 M3.5 11 H7" stroke="#bcd8f4" stroke-width="0.9"/><path d="M8.5 7.2 L9.5 8 L11.5 6 M8.5 11.2 L9.5 12 L11.5 10" stroke="#4f94de" stroke-width="0.8" fill="none"/></svg>
<div class="t" style="left:35.50px;top:122.09px;font-size:5.8px;line-height:5.8px;color:#333;font-weight:400;font-style:normal;">Φίλτρα</div>
<svg class="a" style="left:4px;top:135.5px" width="17" height="17.5" viewBox="0 0 17 17.5"><rect x="12" y="2.5" width="4.6" height="14.2" rx="0.6" fill="#b4d6f8" stroke="#8cc0f0" stroke-width="0.7"/><rect x="0.5" y="0.6" width="12" height="16.2" rx="0.8" fill="#cfe5fa" stroke="#96c6f2" stroke-width="0.8"/><rect x="2.4" y="2.4" width="8.4" height="1.3" fill="#7db6ee"/><path d="M2.6 4.8 h3.6 v2.3 h-3.6z M7.2 4.8 h3.6 v2.3 h-3.6z M2.6 8.1 h3.6 v2.3 h-3.6z M7.2 8.1 h3.6 v2.3 h-3.6z M2.6 11.4 h3.6 v2.3 h-3.6z M7.2 11.4 h3.6 v2.3 h-3.6z" fill="#a4cef5"/><path d="M14.3 5 V14.5" stroke="#d8ecfc" stroke-width="0.8"/></svg>
<div class="t" style="left:24.20px;top:142.59px;font-size:5.45px;line-height:5.45px;color:#333;font-weight:400;font-style:normal;">Προεπισκόπηση</div>
<svg class="a" style="left:69px;top:113px" width="10" height="9" viewBox="0 0 10 9"><rect x="2.5" y="0.5" width="5" height="2.8" fill="#f4f9fe" stroke="#b0d4f6" stroke-width="0.8"/><rect x="0" y="2.6" width="10" height="4.6" rx="1.8" fill="#b2d6f8"/><rect x="2.5" y="6" width="5" height="2.6" fill="#f4f9fe" stroke="#b0d4f6" stroke-width="0.8"/></svg>
<svg class="a" style="left:82px;top:113px" width="8" height="9" viewBox="0 0 8 9"><rect x="0.5" y="0.5" width="6" height="8" fill="#e4e4e4" stroke="#d2d2d2" stroke-width="0.8"/><path d="M2 4.5 H7.5 M6 3 L7.5 4.5 L6 6" stroke="#c2c2c2" stroke-width="0.8" fill="none"/></svg>
<div class="a" style="left:93px;top:113px;width:1px;height:9px;background:#c4c4c4;"></div>
<svg class="a" style="left:96.5px;top:113px" width="9" height="9" viewBox="0 0 9 9"><circle cx="5.6" cy="3.4" r="2.8" fill="#e6f2fd" stroke="#9cc9f3" stroke-width="0.9"/><path d="M3.6 5.4 L0.6 8.4" stroke="#8bbdee" stroke-width="1.1"/></svg>
<svg class="a" style="left:109px;top:113px" width="9" height="9" viewBox="0 0 9 9"><circle cx="5.4" cy="3.3" r="2.8" fill="#e6f2fd" stroke="#9cc9f3" stroke-width="0.9"/><path d="M3.4 5.3 L0.6 8.4" stroke="#8bbdee" stroke-width="1.1"/><path d="M5.8 6 L8.2 8.6 M6.8 8.7 L5.6 5.9 L8.6 6.8" stroke="#6ea9e8" stroke-width="0.9" fill="none"/></svg>
<div class="a" style="left:120px;top:113px;width:1px;height:9px;background:#c4c4c4;"></div>
<svg class="a" style="left:124px;top:113px" width="9" height="9" viewBox="0 0 9 9"><path d="M0.5 2.5 V0.5 H2.5 M6.5 0.5 H8.5 V2.5 M8.5 6.5 V8.5 H6.5 M2.5 8.5 H0.5 V6.5" stroke="#b4d6f4" stroke-width="0.8" fill="none"/><path d="M1.8 3.4 H3.4 V1.8 M5.6 1.8 V3.4 H7.2 M7.2 5.6 H5.6 V7.2 M3.4 7.2 V5.6 H1.8" stroke="#a4cdf2" stroke-width="0.8" fill="none"/></svg>
<div class="a" style="left:134.7px;top:111.8px;width:29.8px;height:11.2px;background:#fff;border:1px solid #cfcfcf"></div>
<div class="t" style="left:136.30px;top:115.25px;font-size:6.2px;line-height:6.2px;color:#444;font-weight:400;font-style:normal;">0</div>
<svg class="a" style="left:157.9px;top:113.5px" width="4" height="8" viewBox="0 0 4 8"><path d="M0.4 2.6 L2 0.8 L3.6 2.6Z M0.4 5.4 L2 7.2 L3.6 5.4Z" fill="#6a6a6a"/></svg>
<svg class="a" style="left:167px;top:113px" width="8" height="9" viewBox="0 0 8 9"><path d="M0.5 0.5 L3 3 M7.5 0.5 L5 3 M7.5 8.5 L5 6 M0.5 8.5 L3 6" stroke="#84b8ec" stroke-width="1.1"/><path d="M1.5 3.2 H3.2 V1.5 M6.5 3.2 H4.8 V1.5 M6.5 5.8 H4.8 V7.5 M1.5 5.8 H3.2 V7.5" stroke="#84b8ec" stroke-width="0.9" fill="none"/></svg>
<svg class="a" style="left:179.5px;top:113px" width="8" height="9" viewBox="0 0 8 9"><rect x="0.5" y="0.5" width="4.5" height="6" fill="#ececec" stroke="#d6d6d6" stroke-width="0.7"/><rect x="3" y="3" width="4.5" height="5.5" fill="#e6e6e6" stroke="#d0d0d0" stroke-width="0.7"/></svg>
<div class="a" style="left:190.5px;top:113px;width:1px;height:9px;background:#c4c4c4;"></div>
<svg class="a" style="left:195.5px;top:115.5px" width="5" height="5" viewBox="0 0 5 5"><path d="M0.6 0 V5" stroke="#8cbeee" stroke-width="1"/><path d="M4.8 0.3 L1.4 2.5 L4.8 4.7Z" fill="#8cbeee"/></svg>
<svg class="a" style="left:207.5px;top:113.5px" width="6" height="9" viewBox="0 0 6 9"><path d="M5 0.6 L1 4.5 L5 8.4" stroke="#8cbeee" stroke-width="1.1" fill="none"/></svg>
<div class="a" style="left:217.3px;top:111.8px;width:26.3px;height:11.4px;background:#fff;border:1px solid #cfcfcf"></div>
<div class="t" style="left:218.70px;top:115.25px;font-size:6.2px;line-height:6.2px;color:#333;font-weight:400;font-style:normal;">2</div>
<svg class="a" style="left:247.5px;top:113.5px" width="6" height="9" viewBox="0 0 6 9"><path d="M1 0.6 L5 4.5 L1 8.4" stroke="#8cbeee" stroke-width="1.1" fill="none"/></svg>
<svg class="a" style="left:259.8px;top:115.5px" width="5" height="5" viewBox="0 0 5 5"><path d="M4.4 0 V5" stroke="#8cbeee" stroke-width="1"/><path d="M0.2 0.3 L3.6 2.5 L0.2 4.7Z" fill="#8cbeee"/></svg>
<div class="a" style="left:269.5px;top:113px;width:1px;height:9px;background:#c4c4c4;"></div>
<svg class="a" style="left:274px;top:113px" width="8" height="9" viewBox="0 0 8 9"><rect x="0.5" y="0.5" width="6" height="8" fill="#eaf4fe" stroke="#b4d6f6" stroke-width="0.8"/><path d="M1.5 4.5 H7.5 M6 3 L7.5 4.5 L6 6" stroke="#7ab4ec" stroke-width="0.9" fill="none"/></svg>
<div class="t" style="left:283.80px;top:114.97px;font-size:6.3px;line-height:6.3px;color:#505050;font-weight:400;font-style:normal;letter-spacing:0.1px">Εξαγωγή</div>
<svg class="a" style="left:310.5px;top:116px" width="4" height="3" viewBox="0 0 4 3"><path d="M0.2 0 L3.2 0 L1.7 2Z" fill="#555"/></svg>
<svg class="a" style="left:318.5px;top:113px" width="9" height="9" viewBox="0 0 9 9"><path d="M1 8.2 L7.8 1.2" stroke="#a8d0f4" stroke-width="1.8" stroke-linecap="round"/></svg>
<svg class="a" style="left:2px;top:3.5px" width="9" height="9.5" viewBox="0 0 9 9.5"><path d="M5.8 8.8 C2.5 7.5 0.4 5.5 0.7 3.6 C1 2 2.6 1.6 3.8 2.6 C4.8 1.4 6.8 1.6 7.8 2.8 C8.8 4.2 8 6.8 5.8 8.8Z" fill="none" stroke="#b8262a" stroke-width="0.75"/><circle cx="4.3" cy="2" r="1.3" fill="#d0302c"/><path d="M4.2 3 L3.4 5.6 L5.4 6.4 L6.6 8" stroke="#c0282a" stroke-width="0.8" fill="none"/></svg>
<svg class="a" style="left:16.5px;top:6.5px" width="4" height="4" viewBox="0 0 4 4"><rect x="0.3" y="0.3" width="3.2" height="1.2" fill="#c8d4e8"/><path d="M0.2 2 L3.8 2 L2 3.8Z" fill="#fff"/></svg>
<svg class="a" style="left:10px;top:20px" width="9" height="9" viewBox="0 0 9 9"><rect x="0" y="0" width="2.6" height="8" fill="#d0ddf2"/><rect x="2.6" y="1.2" width="6" height="3.4" fill="#b8cbe8"/><rect x="6.6" y="1.8" width="1.8" height="1.6" fill="#e06868"/><rect x="3.2" y="5" width="2.4" height="3.4" fill="#2f8ee8"/><rect x="5.8" y="5" width="2.8" height="3.2" fill="#6b5c44"/><rect x="3" y="8" width="6" height="1" fill="#24489a"/></svg>
<svg class="a" style="left:952px;top:5px" width="8" height="6" viewBox="0 0 8 6"><rect x="0.5" y="0.5" width="7" height="5" fill="none" stroke="#1f3b68" stroke-width="0.9"/><path d="M2.4 3.6 L4 2 L5.6 3.6Z" fill="#1f3b68"/></svg>
<div class="a" style="left:973px;top:9px;width:5px;height:1px;background:#1f3b68;"></div>
<svg class="a" style="left:990.5px;top:5px" width="7" height="6" viewBox="0 0 7 6"><rect x="0.5" y="1.8" width="5" height="3.8" fill="none" stroke="#1f3b68" stroke-width="0.9"/><path d="M1.8 1.8 V0.5 H6.5 V4.2 H5.5" stroke="#1f3b68" stroke-width="0.9" fill="none"/></svg>
<svg class="a" style="left:1010.5px;top:5.5px" width="6" height="5" viewBox="0 0 6 5"><path d="M0.6 0.5 L5.4 4.5 M5.4 0.5 L0.6 4.5" stroke="#1f3b68" stroke-width="1"/></svg>
<svg class="a" style="left:1016px;top:22.5px" width="4" height="3" viewBox="0 0 4 3"><path d="M0 0 L4 0 L2 2.5Z" fill="#e6ecf5"/></svg>
<svg class="a" style="left:1017px;top:126px" width="6" height="4" viewBox="0 0 6 4"><path d="M0.8 3.4 L3 1 L5.2 3.4" stroke="#555" stroke-width="1.2" fill="none"/></svg>
<svg class="a" style="left:1017px;top:535.5px" width="6" height="4" viewBox="0 0 6 4"><path d="M0.8 0.6 L3 3 L5.2 0.6" stroke="#555" stroke-width="1.2" fill="none"/></svg></body></html>
